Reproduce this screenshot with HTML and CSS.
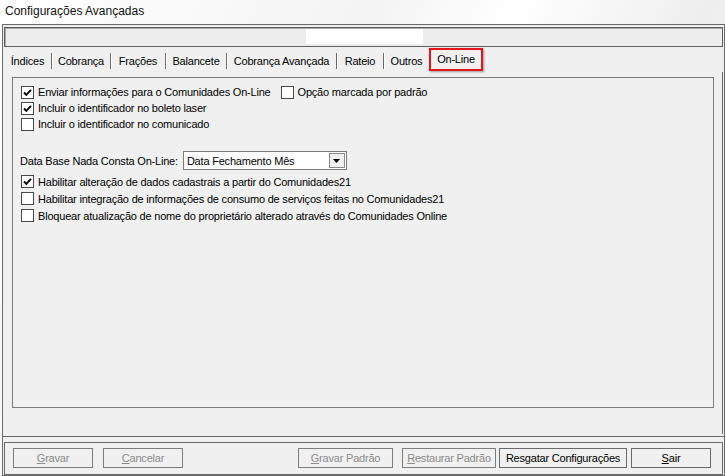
FILE: index.html
```html
<!DOCTYPE html>
<html>
<head>
<meta charset="utf-8">
<link rel="stylesheet" href="styles.css">
</head>
<body>
<div class="window">
  <div class="title">Configurações Avançadas</div>
  <div class="frame">
    <div class="topbox"><div class="glass"></div></div>
    <div class="tabs">
      <div class="tab w1">Índices</div>
      <div class="tab w2">Cobrança</div>
      <div class="tab w3">Frações</div>
      <div class="tab w4">Balancete</div>
      <div class="tab w5">Cobrança Avançada</div>
      <div class="tab w6">Rateio</div>
      <div class="tab w7 last">Outros</div>
      <div class="tab active">On-Line</div>
    </div>
    <div class="page">
      <div class="group">
        <div class="row">
          <label class="check"><span class="box"><svg viewBox="0 0 11 11" width="11" height="11"><path d="M2 5.5 L4.3 7.8 L9 2.8" fill="none" stroke="#000" stroke-width="1.9"/></svg></span>Enviar informações para o Comunidades On-Line</label>
          <label class="check second"><span class="box"></span>Opção marcada por padrão</label>
        </div>
        <div class="row">
          <label class="check"><span class="box"><svg viewBox="0 0 11 11" width="11" height="11"><path d="M2 5.5 L4.3 7.8 L9 2.8" fill="none" stroke="#000" stroke-width="1.9"/></svg></span>Incluir o identificador no boleto laser</label>
        </div>
        <div class="row">
          <label class="check"><span class="box"></span>Incluir o identificador no comunicado</label>
        </div>
        <div class="row select-row">
          <span class="label">Data Base Nada Consta On-Line:</span>
          <div class="select"><span class="value">Data Fechamento Mês</span><span class="arrow"><svg viewBox="0 0 7 4" width="7" height="4"><path d="M0 0 H7 L3.5 4 Z" fill="#000"/></svg></span></div>
        </div>
        <div class="row tall">
          <label class="check"><span class="box"><svg viewBox="0 0 11 11" width="11" height="11"><path d="M2 5.5 L4.3 7.8 L9 2.8" fill="none" stroke="#000" stroke-width="1.9"/></svg></span>Habilitar alteração de dados cadastrais a partir do Comunidades21</label>
        </div>
        <div class="row tall">
          <label class="check"><span class="box"></span>Habilitar integração de informações de consumo de serviços feitas no Comunidades21</label>
        </div>
        <div class="row tall">
          <label class="check"><span class="box"></span>Bloquear atualização de nome do proprietário alterado através do Comunidades Online</label>
        </div>
      </div>
    </div>
    <div class="sep"></div>
    <div class="buttons">
      <div class="btn disabled b1"><u>G</u>ravar</div>
      <div class="btn disabled b2"><u>C</u>ancelar</div>
      <div class="spacer"></div>
      <div class="btn disabled b3"><u>G</u>ravar Padrão</div>
      <div class="btn disabled b4"><u>R</u>estaurar Padrão</div>
      <div class="btn b5">Resgatar Configurações</div>
      <div class="btn b6"><u>S</u>air</div>
    </div>
  </div>
</div>
</body>
</html>
```
FILE: styles.css
```css
* { box-sizing: border-box; }
html, body { margin: 0; padding: 0; }
body {
  width: 725px;
  height: 476px;
  overflow: hidden;
  font-family: "Liberation Sans", Arial, sans-serif;
  font-size: 11px;
  letter-spacing: -0.2px;
  color: #000;
  background: linear-gradient(115deg, #ffffff 0%, #f4f4f4 40%, #ffffff 55%, #eeeeee 75%, #ffffff 100%);
}
.window { display: flex; flex-direction: column; height: 476px; }
.title {
  height: 24px;
  padding: 3px 0 0 5px;
  font-family: "Liberation Sans", Arial, sans-serif;
  font-size: 12px;
  letter-spacing: 0;
  line-height: 16px;
  color: #111;
}
.frame {
  margin-left: 2px;
  width: 723px;
  height: 452px;
  border: 1px solid #6a6a6a;
  background: #f0f0f0;
  display: flex;
  flex-direction: column;
}
.topbox {
  margin: 2px 1px 0 1px;
  height: 20px;
  border: 1px solid #5e5e5e;
  box-shadow: inset 1px 1px 0 #a9a9a9;
  background: #ededed;
  padding: 1px 0 0 301px;
}
.glass { width: 117px; height: 15px; background: #fff; }
.tabs {
  margin: 1px 0 0 1px;
  height: 24px;
  display: flex;
  align-items: flex-end;
}
.tab {
  height: 16px;
  margin-bottom: 3px;
  line-height: 16px;
  text-align: center;
  border-right: 1px solid #6b6b6b;
  box-shadow: 1px 0 0 #fff;
  color: #000;
}
.tab.last { border-right: none; box-shadow: none; }
.w1 { width: 48px; }
.w2 { width: 59px; }
.w3 { width: 55px; }
.w4 { width: 61px; }
.w5 { width: 110px; }
.w6 { width: 47px; }
.w7 { width: 45px; }
.tab.active {
  width: 54px;
  height: 23px;
  margin-bottom: 1px;
  line-height: 19px;
  border: 2px solid #e3141b;
  box-shadow: 1px 1px 2px rgba(0,0,0,0.35);
}
.page {
  margin-left: 1px;
  width: 719px;
  height: 362px;
  border-right: 1px solid #6a6a6a;
  padding: 5px 0 0 8px;
}
.group {
  width: 702px;
  height: 331px;
  border: 1px solid #7d7d7d;
  padding: 6px 0 0 8px;
}
.row { display: flex; align-items: center; height: 16px; }
.row.tall { height: 17px; }
.check { display: flex; align-items: center; white-space: nowrap; }
.check.second { margin-left: 10px; }
.box {
  width: 13px;
  height: 13px;
  border: 1px solid #4a4a4a;
  background: #fff;
  margin-right: 4px;
  display: flex;
  align-items: center;
  justify-content: center;
  flex: none;
}
.box svg { display: block; }
.select-row { height: 19px; margin: 19px 0 3px -1px; }
.label { margin-right: 5px; }
.select {
  width: 164px;
  height: 19px;
  border: 1px solid #7a7a7a;
  background: #fff;
  display: flex;
  align-items: center;
  justify-content: space-between;
  padding: 0 1px 0 3px;
}
.arrow {
  width: 16px;
  height: 15px;
  border: 1px solid #8a8a8a;
  background: #f0f0f0;
  display: flex;
  align-items: center;
  justify-content: center;
}
.arrow svg { display: block; }
.sep {
  margin: 2px 0 0 0;
  height: 1px;
  background: #6a6a6a;
}
.buttons {
  margin: 5px 1px 0 1px;
  height: 33px;
  border: 1px solid #6a6a6a;
  display: flex;
  align-items: flex-start;
  padding: 5px 0 0 8px;
}
.btn {
  height: 20px;
  line-height: 18px;
  text-align: center;
  border: 1px solid #6a6a6a;
  color: #000;
  flex: none;
}
.btn u { text-decoration: underline; }
.btn.disabled { color: #8b8b8b; border-color: #7d7d7d; }
.b1 { width: 80px; }
.b2 { width: 80px; margin-left: 10px; }
.spacer { flex: 1; }
.b3 { width: 95px; }
.b4 { width: 94px; margin-left: 9px; }
.b5 { width: 128px; margin-left: 3px; }
.b6 { width: 80px; margin-left: 4px; margin-right: 11px; }
```
